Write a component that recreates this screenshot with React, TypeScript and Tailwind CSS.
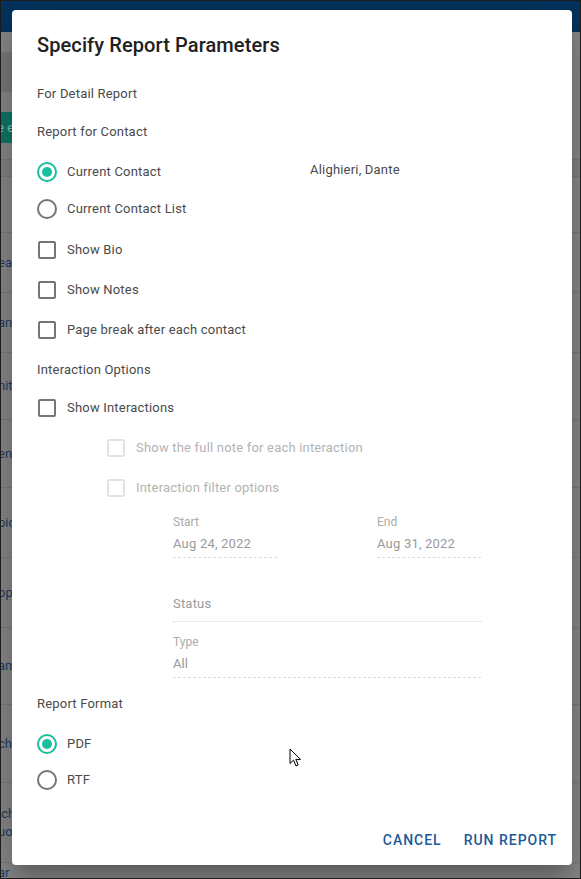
import React from 'react';

const FONT = { fontFamily: 'Roboto, "Noto Sans", Arial, sans-serif' };

// 背景の一覧行（モーダルの後ろに隠れている部分）
const BG_ROWS: { h: number; text: string; sub?: string }[] = [
  { h: 56, text: '' },
  { h: 60, text: 'ea' },
  { h: 60, text: 'ant' },
  { h: 67, text: 'nit' },
  { h: 68, text: 'en' },
  { h: 70, text: 'pid' },
  { h: 70, text: 'op' },
  { h: 77, text: 'am' },
  { h: 78, text: 'ch' },
  { h: 80, text: 'ich', sub: 'uo' },
  { h: 20, text: 'ar' },
];

function Radio({ checked }: { checked?: boolean }) {
  return (
    <span
      className={`flex h-[20px] w-[20px] shrink-0 items-center justify-center rounded-full border-2 ${
        checked ? 'border-[#17bf9e]' : 'border-[#757575]'
      }`}
    >
      {checked && <span className="h-[10px] w-[10px] rounded-full bg-[#17bf9e]" />}
    </span>
  );
}

function Checkbox({ disabled }: { disabled?: boolean }) {
  return (
    <span
      className={`block h-[18px] w-[18px] shrink-0 rounded-[2px] border-2 ${
        disabled ? 'border-[#e3e3e3]' : 'border-[#757575]'
      }`}
    />
  );
}

function OptionRow({
  control,
  label,
  disabled,
  className = '',
  gap = 'gap-[10px]',
}: {
  control: React.ReactNode;
  label: string;
  disabled?: boolean;
  className?: string;
  gap?: string;
}) {
  return (
    <div className={`flex h-[36px] items-center ${gap} ${className}`}>
      {control}
      <span
        className={`text-[13px] tracking-[0.015em] ${disabled ? 'text-[#b3b3b3]' : 'text-[#4a4a4a]'}`}
      >
        {label}
      </span>
    </div>
  );
}

function SectionLabel({ text, className = '' }: { text: string; className?: string }) {
  return (
    <div className={`flex h-[36px] items-center text-[13px] tracking-[0.015em] text-[#4a4a4a] ${className}`}>
      {text}
    </div>
  );
}

function DateField({ label, value }: { label: string; value: string }) {
  return (
    <div className="w-[104px]">
      <div className="text-[12px] leading-[14px] text-[#ababab]">{label}</div>
      <div className="mt-[6px] border-b border-dashed border-[#dcdcdc] pb-[4px] text-[13px] leading-[18px] tracking-[0.015em] text-[#9a9a9a]">
        {value}
      </div>
    </div>
  );
}

export default function App() {
  return (
    <div
      className="relative h-[879px] w-[581px] overflow-hidden border border-[#1c1c1c] bg-[#8b8b8b]"
      style={FONT}
    >
      {/* 背景ページ（暗転済み） */}
      <div className="h-[31px] bg-[#03345f]" />
      <div className="h-[20px]" />
      <div className="h-[40px] w-[20px] bg-[#7c7c7c]" />
      <div className="h-[20px]" />
      <div className="flex h-[31px] w-[20px] items-center bg-[#0e7a6a] text-[13px] text-[#8fc9bf]">
        <span className="-ml-[4px] whitespace-nowrap">e e</span>
      </div>
      <div className="h-[17px] border-b border-[#7d7d7d]" />
      <div className="h-[17px] border-b border-[#7d7d7d] bg-[#858585]" />
      {BG_ROWS.map((r, i) => (
        <div
          key={i}
          className="flex flex-col justify-center border-b border-[#7d7d7d] text-[13px] leading-[18px] text-[#1f3d63]"
          style={{ height: r.h }}
        >
          <span className="-ml-[3px]">{r.text}</span>
          {r.sub && <span className="-ml-[3px]">{r.sub}</span>}
        </div>
      ))}

      {/* ダイアログ */}
      <div className="absolute left-[11px] top-[9px] flex h-[855px] w-[560px] flex-col rounded-[4px] bg-white px-[25px] pt-[17px] shadow-[0_11px_15px_-7px_rgba(0,0,0,0.2),0_24px_38px_3px_rgba(0,0,0,0.14),0_9px_46px_8px_rgba(0,0,0,0.12)]">
        <div className="flex h-[36px] items-center text-[20px] font-medium tracking-[0.005em] text-[#212121]">
          Specify Report Parameters
        </div>
        <SectionLabel text="For Detail Report" className="mt-[13px]" />
        <SectionLabel text="Report for Contact" className="mt-[2px]" />

        <div className="mt-[4px] flex h-[36px] items-center">
          <div className="flex w-[273px] items-center gap-[10px]">
            <Radio checked />
            <span className="text-[13px] tracking-[0.015em] text-[#4a4a4a]">Current Contact</span>
          </div>
          <span className="-mt-[4px] text-[13px] tracking-[0.015em] text-[#4a4a4a]">Alighieri, Dante</span>
        </div>
        <OptionRow control={<Radio />} label="Current Contact List" className="mt-[1px]" />

        <OptionRow control={<Checkbox />} label="Show Bio" className="mt-[5px] pl-[1px]" gap="gap-[11px]" />
        <OptionRow control={<Checkbox />} label="Show Notes" className="mt-[4px] pl-[1px]" gap="gap-[11px]" />
        <OptionRow
          control={<Checkbox />}
          label="Page break after each contact"
          className="mt-[4px] pl-[1px]"
          gap="gap-[11px]"
        />

        <SectionLabel text="Interaction Options" className="mt-[4px]" />
        <OptionRow control={<Checkbox />} label="Show Interactions" className="mt-[2px] pl-[1px]" gap="gap-[11px]" />

        <OptionRow
          control={<Checkbox disabled />}
          label="Show the full note for each interaction"
          disabled
          className="mt-[4px] pl-[70px]"
          gap="gap-[11px]"
        />
        <OptionRow
          control={<Checkbox disabled />}
          label="Interaction filter options"
          disabled
          className="mt-[4px] pl-[70px]"
          gap="gap-[11px]"
        />

        <div className="pl-[136px]">
          <div className="mt-[9px] flex w-[308px] justify-between">
            <DateField label="Start" value="Aug 24, 2022" />
            <DateField label="End" value="Aug 31, 2022" />
          </div>
          <div className="mt-[37px] w-[308px] border-b border-dotted border-[#d6d6d6] pb-[8px] text-[13px] leading-[18px] tracking-[0.015em] text-[#9a9a9a]">
            Status
          </div>
          <div className="mt-[13px] w-[308px]">
            <div className="text-[12px] leading-[14px] text-[#ababab]">Type</div>
            <div className="mt-[6px] border-b border-dashed border-[#dcdcdc] pb-[4px] text-[13px] leading-[18px] text-[#9a9a9a]">
              All
            </div>
          </div>
        </div>

        <SectionLabel text="Report Format" className="mt-[8px]" />
        <OptionRow control={<Radio checked />} label="PDF" className="mt-[4px]" />
        <OptionRow control={<Radio />} label="RTF" />

        <div className="-mr-[10px] mt-auto mb-[7px] flex h-[36px] items-center justify-end gap-[22px]">
          <button className="text-[14px] font-medium uppercase tracking-[0.07em] text-[#1b5a96]">Cancel</button>
          <button className="text-[14px] font-medium uppercase tracking-[0.07em] text-[#1b5a96]">Run Report</button>
        </div>
      </div>

      {/* マウスカーソル */}
      <svg className="absolute left-[288px] top-[747px]" width="13" height="20" viewBox="0 0 13 20">
        <path
          d="M1 1 L1 15.5 L4.5 12.2 L7 18 L9.2 17 L6.8 11.4 L11.5 11.4 Z"
          fill="#fff"
          stroke="#000"
          strokeWidth="1"
          strokeLinejoin="round"
        />
      </svg>
    </div>
  );
}
